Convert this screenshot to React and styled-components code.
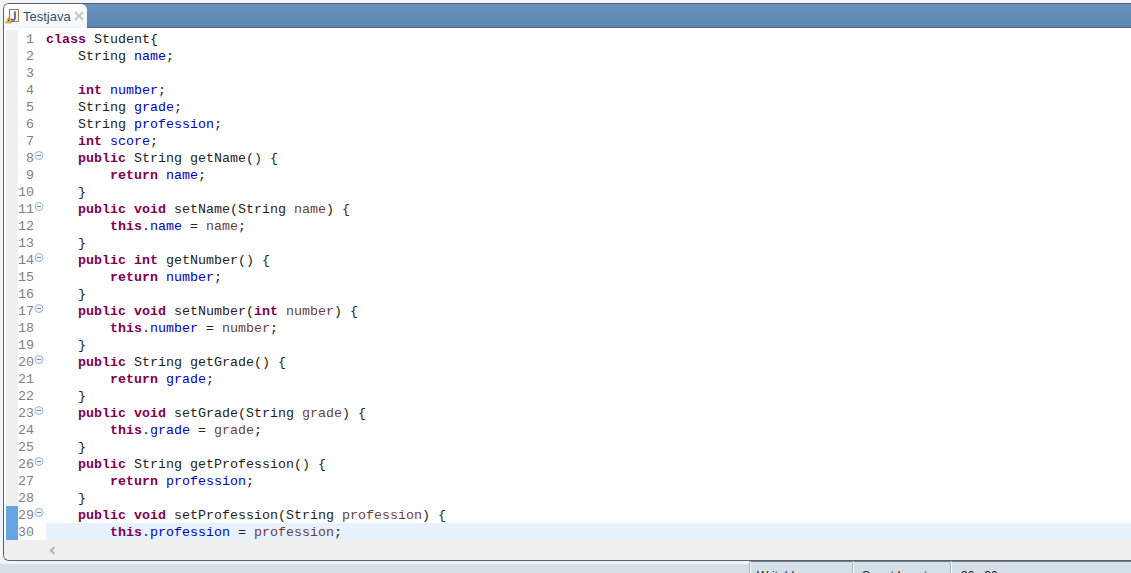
import React from "react";
import styled, { createGlobalStyle } from "styled-components";

const Global = createGlobalStyle`
  html, body { margin: 0; padding: 0; height: 573px; overflow: hidden; background: #f1f5f9; }
  #root { height: 573px; }
`;

const Page = styled.div`
  height: 573px;
  overflow: hidden;
  display: flex;
  flex-direction: column;
  background: #f1f5f9;
`;

const Frame = styled.div`
  margin: 3px 0 0 3px;
  height: 558px;
  flex: none;
  box-sizing: border-box;
  display: flex;
  flex-direction: column;
  border: 1px solid #56616c;
  border-right: none;
  border-radius: 6px 0 0 6px;
  background: #f0f0f0;
  overflow: hidden;
`;

const TabBar = styled.div`
  height: 23px;
  flex: none;
  display: flex;
  background: linear-gradient(#6a93bb, #5a87b4);
  border-bottom: 1px solid #56616c;
`;

const Tab = styled.div`
  width: 83px;
  height: 24px;
  box-sizing: border-box;
  display: flex;
  align-items: center;
  padding: 0 2px 0 1px;
  background: linear-gradient(#ffffff, #f4f8fc);
  border-radius: 0 6px 0 0;
  font: 13px "Liberation Sans", Arial, sans-serif;
  color: #2f4f6f;
`;

const TabLabel = styled.span`
  margin-left: 2px;
  flex: 1;
`;

const Editor = styled.div`
  background: #fff;
  padding-top: 2px;
  flex: none;
  font: 13.33px/19px "Liberation Mono", "Courier New", monospace;
  color: #222;
`;

const Row = styled.div`
  display: flex;
  height: 17px;
  white-space: pre;
`;

const Ruler = styled.div`
  width: 12px;
  margin-left: 2px;
  flex: none;
  background: ${(p) => (p.$mark ? "#66a5e2" : "#f0f0f0")};
`;

const LineNo = styled.div`
  width: 16px;
  flex: none;
  text-align: right;
  color: #808080;
`;

const Fold = styled.div`
  width: 12px;
  flex: none;
  display: flex;
  align-items: flex-start;
  padding-top: 2px;
  box-sizing: border-box;
`;

const Code = styled.div`
  flex: 1;
  background: ${(p) => (p.$current ? "#e8f2fe" : "transparent")};
`;

const Kw = styled.span`
  color: #7f0055;
  font-weight: 700;
`;
const Field = styled.span`
  color: #0000c0;
`;
const Param = styled.span`
  color: #6a3e3e;
`;

const ScrollRow = styled.div`
  flex: 1;
  background: #f0f0f0;
  padding: 6px 0 0 45px;
  display: flex;
  align-items: flex-start;
`;

const StatusBar = styled.div`
  flex: none;
  height: 12px;
  box-sizing: border-box;
  display: flex;
  justify-content: flex-end;
  background: linear-gradient(#f1f5f9 0 3px, #d5dfe8 3px);
  font: 12px/16px "Liberation Sans", Arial, sans-serif;
  color: #222;
`;

const StatusCell = styled.div`
  width: ${(p) => p.$w}px;
  box-sizing: border-box;
  padding: 6px 0 0 ${(p) => p.$pad}px;
  background: #d5dfe8;
  border-top: 1px solid #717b85;
  border-left: 1px solid #fff;
  box-shadow: -1px 0 0 #aab5c0;
`;

const FileIcon = () => (
  <svg width="16" height="16" viewBox="0 0 16 16" style={{ flex: "none" }}>
    <path d="M4.5 1.5h9v12h-9z" fill="#f6f3e6" stroke="#8a7a55" />
    <path d="M10 3.5v6.2c0 1.6-1 2.3-2.2 2.3-1 0-1.7-.5-2-1.3" fill="none" stroke="#5a4a8a" strokeWidth="1.6" />
    <path d="M3.5 9.5l3 5.5h-6z" fill="#f2c230" stroke="#b8860b" strokeWidth=".6" />
    <path d="M3.5 11.5v1.8" stroke="#7a3b00" />
  </svg>
);

const CloseIcon = () => (
  <svg width="12" height="12" viewBox="0 0 12 12" style={{ flex: "none" }}>
    <path d="M2 2l8 8M10 2l-8 8" stroke="#c3c8cc" strokeWidth="2" fill="none" />
  </svg>
);

const FoldIcon = () => (
  <svg width="10" height="10" viewBox="0 0 10 10">
    <circle cx="5" cy="4.5" r="4" fill="#f2f6fa" stroke="#9fb6c8" />
    <path d="M2.8 4.5h4.4" stroke="#6f8ea6" />
  </svg>
);

const ArrowLeft = () => (
  <svg width="7" height="9" viewBox="0 0 7 9">
    <path d="M5.5 1L2 4.5l3.5 3.5" stroke="#b0b4b8" strokeWidth="2" fill="none" />
  </svg>
);

const p = (t) => <Kw>{t}</Kw>;
const f = (t) => <Field>{t}</Field>;
const a = (t) => <Param>{t}</Param>;

const getter = (type, name, field) => [
  { fold: true, code: <>    {p("public")} {type === "int" ? p("int") : type} {name}() {"{"}</> },
  { code: <>        {p("return")} {f(field)};</> },
  { code: <>    {"}"}</> },
];
const setter = (type, name, field) => [
  { fold: true, code: <>    {p("public")} {p("void")} {name}({type === "int" ? p("int") : type} {a(field)}) {"{"}</> },
  { code: <>        {p("this")}.{f(field)} = {a(field)};</> },
  { code: <>    {"}"}</> },
];

const lines = [
  { code: <>{p("class")} Student{"{"}</> },
  { code: <>    String {f("name")};</> },
  { code: <> </> },
  { code: <>    {p("int")} {f("number")};</> },
  { code: <>    String {f("grade")};</> },
  { code: <>    String {f("profession")};</> },
  { code: <>    {p("int")} {f("score")};</> },
  ...getter("String", "getName", "name"),
  ...setter("String", "setName", "name"),
  ...getter("int", "getNumber", "number"),
  ...setter("int", "setNumber", "number"),
  ...getter("String", "getGrade", "grade"),
  ...setter("String", "setGrade", "grade"),
  ...getter("String", "getProfession", "profession"),
  ...setter("String", "setProfession", "profession").slice(0, 2),
];

export default function App() {
  return (
    <Page>
      <Global />
      <Frame>
        <TabBar>
          <Tab>
            <FileIcon />
            <TabLabel>Testjava</TabLabel>
            <CloseIcon />
          </Tab>
        </TabBar>
        <Editor>
          {lines.map((l, i) => (
            <Row key={i}>
              <Ruler $mark={i >= 28} />
              <LineNo>{i + 1}</LineNo>
              <Fold>{l.fold && <FoldIcon />}</Fold>
              <Code $current={i === 29}>{l.code}</Code>
            </Row>
          ))}
        </Editor>
        <ScrollRow>
          <ArrowLeft />
        </ScrollRow>
      </Frame>
      <StatusBar>
        <StatusCell $w={103} $pad={6}>Writable</StatusCell>
        <StatusCell $w={98} $pad={8}>Smart Insert</StatusCell>
        <StatusCell $w={180} $pad={9}>30 : 30</StatusCell>
      </StatusBar>
    </Page>
  );
}
